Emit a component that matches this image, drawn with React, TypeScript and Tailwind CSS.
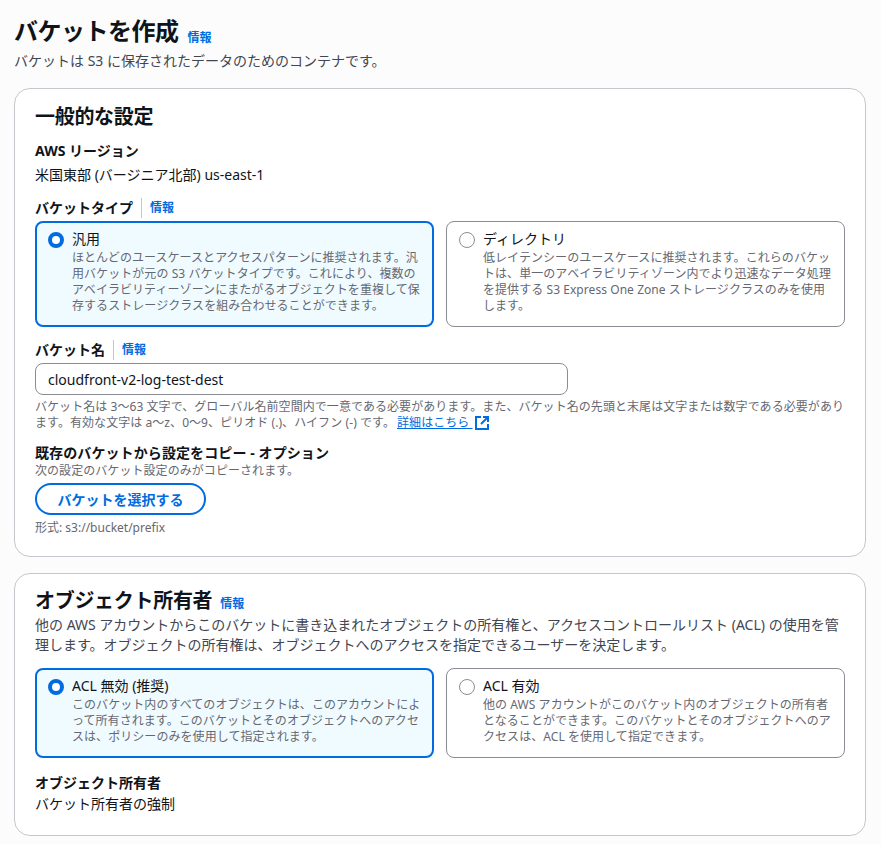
const FONT = "font-['Noto_Sans','Noto_Sans_CJK_JP',sans-serif]"

function Info({ className = "" }: { className?: string }) {
  return <a className={`text-[12px] font-bold leading-[16px] text-[#006ce0] ${className}`}>情報</a>
}

function LabelWithInfo({ label }: { label: string }) {
  return (
    <div className="flex h-[20px] items-center">
      <span className="text-[14px] font-bold leading-[20px] text-[#0f141a]">{label}</span>
      <span className="mx-[8px] h-[20px] w-px bg-[#c6c6cd]" />
      <Info />
    </div>
  )
}

function RadioCard({
  selected,
  title,
  lines,
  height,
}: {
  selected?: boolean
  title: string
  lines: string[]
  height: string
}) {
  return (
    <div
      className={`flex min-w-0 rounded-[8px] ${height} ${
        selected
          ? "border-2 border-[#006ce0] bg-[#f0fbff] pl-[11px] pt-[7px]"
          : "border border-[#8c8c94] bg-white pl-[12px] pt-[8px]"
      }`}
    >
      <div
        className={`mt-[2px] h-[16px] w-[16px] shrink-0 rounded-full ${
          selected ? "border-[4px] border-[#006ce0] bg-white" : "border border-[#8c8c94] bg-white"
        }`}
      />
      <div className="ml-[8px]">
        <div className="mb-[2px] text-[14px] leading-[18px] text-[#0f141a]">{title}</div>
        {lines.map((l) => (
          <div key={l} className="whitespace-nowrap text-[12px] leading-[16px] tracking-[0.06px] text-[#656871]">
            {l}
          </div>
        ))}
      </div>
    </div>
  )
}

export default function App() {
  return (
    <div className={`min-h-[844px] overflow-hidden bg-[#fcfcfc] pl-[14px] pr-[15px] pt-[15px] ${FONT}`}>
      <div className="flex h-[32px] items-baseline">
        <h1 className="text-[24px] font-bold leading-[32px] tracking-[-0.5px] text-[#0f141a]">バケットを作成</h1>
        <Info className="ml-[9px] translate-y-[2px]" />
      </div>
      <p className="mt-[4px] text-[14px] leading-[20px] text-[#424650]">
        バケットは S3 に保存されたデータのためのコンテナです。
      </p>

      <section className="mt-[17px] h-[469px] rounded-[16px] border border-[#c6c6cd] bg-white px-[20px] pt-[14px]">
        <h2 className="text-[20px] font-bold leading-[28px] tracking-[-0.3px] text-[#0f141a]">一般的な設定</h2>
        <div className="mt-[10px] text-[14px] font-bold leading-[20px] text-[#0f141a]">AWS リージョン</div>
        <div className="mt-[4px] text-[14px] leading-[20px] text-[#0f141a]">米国東部 (バージニア北部) us-east-1</div>

        <div className="mt-[13px]">
          <LabelWithInfo label="バケットタイプ" />
        </div>
        <div className="mt-[3px] grid grid-cols-2 gap-[12px]">
          <RadioCard
            selected
            height="h-[106px]"
            title="汎用"
            lines={[
              "ほとんどのユースケースとアクセスパターンに推奨されます。汎",
              "用バケットが元の S3 バケットタイプです。これにより、複数の",
              "アベイラビリティーゾーンにまたがるオブジェクトを重複して保",
              "存するストレージクラスを組み合わせることができます。",
            ]}
          />
          <RadioCard
            height="h-[106px]"
            title="ディレクトリ"
            lines={[
              "低レイテンシーのユースケースに推奨されます。これらのバケッ",
              "トは、単一のアベイラビリティゾーン内でより迅速なデータ処理",
              "を提供する S3 Express One Zone ストレージクラスのみを使用",
              "します。",
            ]}
          />
        </div>

        <div className="mt-[13px]">
          <LabelWithInfo label="バケット名" />
        </div>
        <div className="mt-[3px] flex h-[32px] w-[533px] items-center rounded-[8px] border border-[#8c8c94] bg-white px-[12px] text-[14px] text-[#0f141a]">
          cloudfront-v2-log-test-dest
        </div>
        <div className="mt-[4px] text-[12px] leading-[16px] tracking-[0.06px] text-[#656871]">
          <div className="whitespace-nowrap">
            バケット名は 3〜63 文字で、グローバル名前空間内で一意である必要があります。また、バケット名の先頭と末尾は文字または数字である必要があり
          </div>
          <div className="flex items-center whitespace-nowrap">
            ます。有効な文字は a〜z、0〜9、ピリオド (.)、ハイフン (-) です。
            <a className="ml-[2px] flex items-center text-[#006ce0]">
              <span className="underline">詳細はこちら&nbsp;</span>
              <svg className="ml-px h-[16px] w-[16px]" viewBox="0 0 16 16" fill="none" stroke="#006ce0" strokeWidth="2">
                <path d="M14 9v5H2V2h5" />
                <path d="M9 2h5v5" />
                <path d="M14 2 7 9" />
              </svg>
            </a>
          </div>
        </div>

        <div className="mt-[12px] text-[14px] font-bold leading-[20px] tracking-[0.1px] text-[#0f141a]">
          既存のバケットから設定をコピー - オプション
        </div>
        <div className="text-[12px] leading-[16px] tracking-[0.06px] text-[#656871]">次の設定のバケット設定のみがコピーされます。</div>
        <button className="mt-[4px] flex h-[32px] w-[171px] items-center justify-center rounded-full border-2 border-[#006ce0] bg-white text-[14px] font-bold text-[#006ce0]">
          バケットを選択する
        </button>
        <div className="mt-[5px] text-[12px] leading-[16px] text-[#656871]">形式: s3://bucket/prefix</div>
      </section>

      <section className="mt-[16px] h-[263px] rounded-[16px] border border-[#c6c6cd] bg-white px-[20px] pt-[13px]">
        <div className="flex items-baseline">
          <h2 className="text-[20px] font-bold leading-[28px] tracking-[-0.3px] text-[#0f141a]">オブジェクト所有者</h2>
          <Info className="ml-[8px]" />
        </div>
        <p className="text-[14px] leading-[20px] text-[#424650]">
          他の AWS アカウントからこのバケットに書き込まれたオブジェクトの所有権と、アクセスコントロールリスト (ACL) の使用を管理します。オブジェクトの所有権は、オブジェクトへのアクセスを指定できるユーザーを決定します。
        </p>
        <div className="mt-[13px] grid grid-cols-2 gap-[12px]">
          <RadioCard
            selected
            height="h-[90px]"
            title="ACL 無効 (推奨)"
            lines={[
              "このバケット内のすべてのオブジェクトは、このアカウントによ",
              "って所有されます。このバケットとそのオブジェクトへのアクセ",
              "スは、ポリシーのみを使用して指定されます。",
            ]}
          />
          <RadioCard
            height="h-[90px]"
            title="ACL 有効"
            lines={[
              "他の AWS アカウントがこのバケット内のオブジェクトの所有者",
              "となることができます。このバケットとそのオブジェクトへのア",
              "クセスは、ACL を使用して指定できます。",
            ]}
          />
        </div>
        <div className="mt-[15px] text-[14px] font-bold leading-[20px] text-[#0f141a]">オブジェクト所有者</div>
        <div className="mt-[1px] text-[14px] leading-[20px] text-[#0f141a]">バケット所有者の強制</div>
      </section>
    </div>
  )
}
